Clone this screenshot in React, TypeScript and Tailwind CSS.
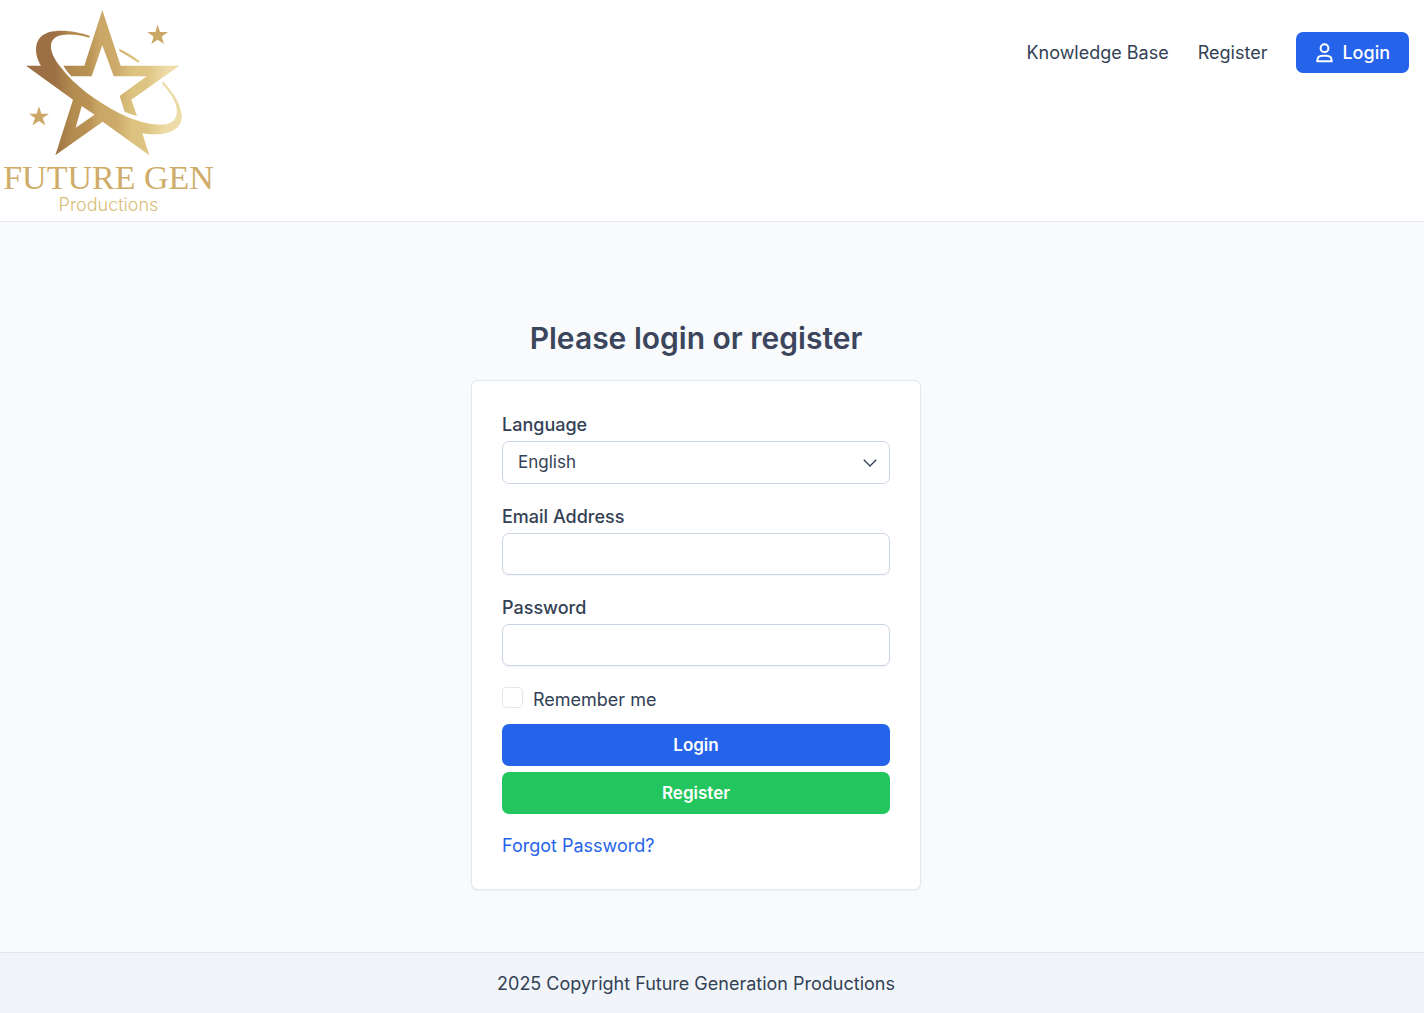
import { useId, useState } from "react";
import type { ReactNode } from "react";

const inputClass =
  "block w-full h-[42px] px-[15px] rounded-[7px] border border-slate-300 bg-white shadow-xs outline-none focus:border-[#2563eb]";

function Logo() {
  return (
    <a href="#" className="block w-[217px] shrink-0 pb-[7px] text-center">
      <svg viewBox="0 0 651 480" className="block w-full" aria-hidden="true">
        <defs>
          <linearGradient id="gold" gradientUnits="userSpaceOnUse" x1="78" y1="0" x2="545" y2="0">
            <stop offset="0.18" stopColor="#9c7044" />
            <stop offset="0.3" stopColor="#b38c50" />
            <stop offset="0.4" stopColor="#b89153" />
            <stop offset="0.47" stopColor="#cba767" />
            <stop offset="0.58" stopColor="#cdaa69" />
            <stop offset="0.68" stopColor="#dcc27f" />
            <stop offset="0.78" stopColor="#dec583" />
            <stop offset="0.9" stopColor="#eddba8" />
          </linearGradient>
        </defs>
        <g fill="url(#gold)">
          <path d="M307 30 L362 197 H538 L394 299 L411 348 Q392 343 374 335 L359 288 L440 229 H341 L307 136 L275 229 H214 Q200 214 190 197 H253 Z" />
          <path
            fillRule="evenodd"
            d="M78 197 H123 C102 163 98 113 146 97 C180 87 232 94 270 108 L267 113 C228 101 184 99 165 113 C147 127 147 155 180 199 C222 256 290 305 355 338 C410 365 462 378 498 373 C546 363 541 309 485 250 L490 245 C522 279 542 312 545 345 C548 388 506 412 427 400 L448 466 L308 365 L166 466 L219 299 Z M245 318 L284 344 L227 383 Z"
          />
          <path d="M357 146 Q390 160 419 184 L415 188 Q388 171 359 154 Z" />
        </g>
        <g fill="#cba765">
          <path d="M473 74 L480 96 H504 L485 110 L492 132 L473 119 L454 132 L461 110 L442 96 H466 Z" />
          <path d="M117 319 L124 341 H147 L128 354 L136 376 L117 363 L97 376 L105 354 L87 341 H110 Z" />
        </g>
      </svg>
      <span className="block font-['Liberation_Serif',serif] text-[34px] leading-9 whitespace-nowrap text-[#cfac68]">
        FUTURE GEN
      </span>
      <span className="block text-lg leading-[18px] font-light text-[#d9bd78]">Productions</span>
    </a>
  );
}

function UserIcon() {
  return (
    <svg viewBox="0 0 17 20" className="w-[17px] h-5" fill="none" stroke="currentColor" strokeWidth="2" aria-hidden="true">
      <circle cx="8.5" cy="5.2" r="3.9" />
      <path d="M1.2 18.2 C1.2 14.6 3.6 12.8 6.6 12.8 H10.4 C13.4 12.8 15.8 14.6 15.8 18.2 Z" strokeLinejoin="round" />
    </svg>
  );
}

function Field({ label, children }: { label: string; children: (id: string) => ReactNode }) {
  const id = useId();

  return (
    <div className="mb-[19px]">
      <label htmlFor={id} className="block mb-[3px] font-medium">
        {label}
      </label>
      {children(id)}
    </div>
  );
}

function Header() {
  return (
    <header className="flex items-start justify-between bg-white border-b border-slate-200">
      <Logo />
      <nav className="flex items-center gap-[29px] pt-8 pr-[15px] pb-8">
        <a href="#" className="hover:text-[#2563eb]">
          Knowledge Base
        </a>
        <a href="#" className="hover:text-[#2563eb]">
          Register
        </a>
        <a
          href="#"
          className="flex items-center gap-[9px] h-[41px] pl-5 pr-[19px] rounded-[7px] bg-[#2563eb] font-medium text-white hover:bg-[#1d4ed8]">
          <UserIcon />
          Login
        </a>
      </nav>
    </header>
  );
}

function LoginForm() {
  const [language, setLanguage] = useState("English");
  const [remember, setRemember] = useState(false);

  return (
    <form
      onSubmit={(e) => e.preventDefault()}
      className="w-full max-w-[450px] p-[30px] rounded-[7px] border border-slate-200 bg-white shadow-xs">
      <Field label="Language">
        {(id) => (
          <div className="relative">
            <select
              id={id}
              value={language}
              onChange={(e) => setLanguage(e.target.value)}
              className="block w-full h-[43px] px-[15px] appearance-none rounded-[7px] border border-slate-300 bg-white text-[17px] outline-none focus:border-[#2563eb]">
              <option>English</option>
              <option>Deutsch</option>
              <option>Español</option>
              <option>Français</option>
            </select>
            <svg
              viewBox="0 0 14 8"
              className="absolute right-[13px] top-[18px] w-3.5 h-2 pointer-events-none"
              fill="none"
              stroke="currentColor"
              strokeWidth="1.3"
              aria-hidden="true">
              <path d="M0.8 0.8 L7 7 L13.2 0.8" />
            </svg>
          </div>
        )}
      </Field>
      <Field label="Email Address">
        {(id) => <input id={id} type="email" name="email" className={inputClass} />}
      </Field>
      <Field label="Password">
        {(id) => <input id={id} type="password" name="password" className={inputClass} />}
      </Field>

      <label className="flex items-center gap-2.5 mt-5 mb-[11px]">
        <input
          type="checkbox"
          checked={remember}
          onChange={(e) => setRemember(e.target.checked)}
          className="w-[21px] h-[21px] mb-1 appearance-none rounded-[4px] border border-slate-200 bg-white checked:bg-[#2563eb]"
        />
        Remember me
      </label>

      <div className="flex flex-col gap-1.5">
        <button type="submit" className="h-[42px] rounded-[7px] bg-[#2563eb] text-[17px] font-semibold text-white hover:bg-[#1d4ed8]">
          Login
        </button>
        <button type="button" className="h-[42px] rounded-[7px] bg-[#22c55e] text-[17px] font-semibold text-white hover:bg-[#16a34a]">
          Register
        </button>
      </div>

      <a href="#" className="block w-fit mt-[18px] text-[#2563eb] hover:text-[#1d4ed8]">
        Forgot Password?
      </a>
    </form>
  );
}

export default function App() {
  return (
    <div className="flex flex-col min-h-screen bg-slate-50 font-['Inter',sans-serif] text-lg leading-[27px] text-[#334155]">
      <Header />
      <main className="flex-1 flex flex-col items-center pt-24 pr-8 pb-[60px]">
        <h1 className="mb-[22px] text-[30px] leading-10 font-semibold text-[#3b455b]">Please login or register</h1>
        <LoginForm />
      </main>
      <footer className="pt-[17px] pb-4 pr-8 border-t border-slate-200 bg-slate-100 text-center">
        2025 Copyright Future Generation Productions
      </footer>
    </div>
  );
}
